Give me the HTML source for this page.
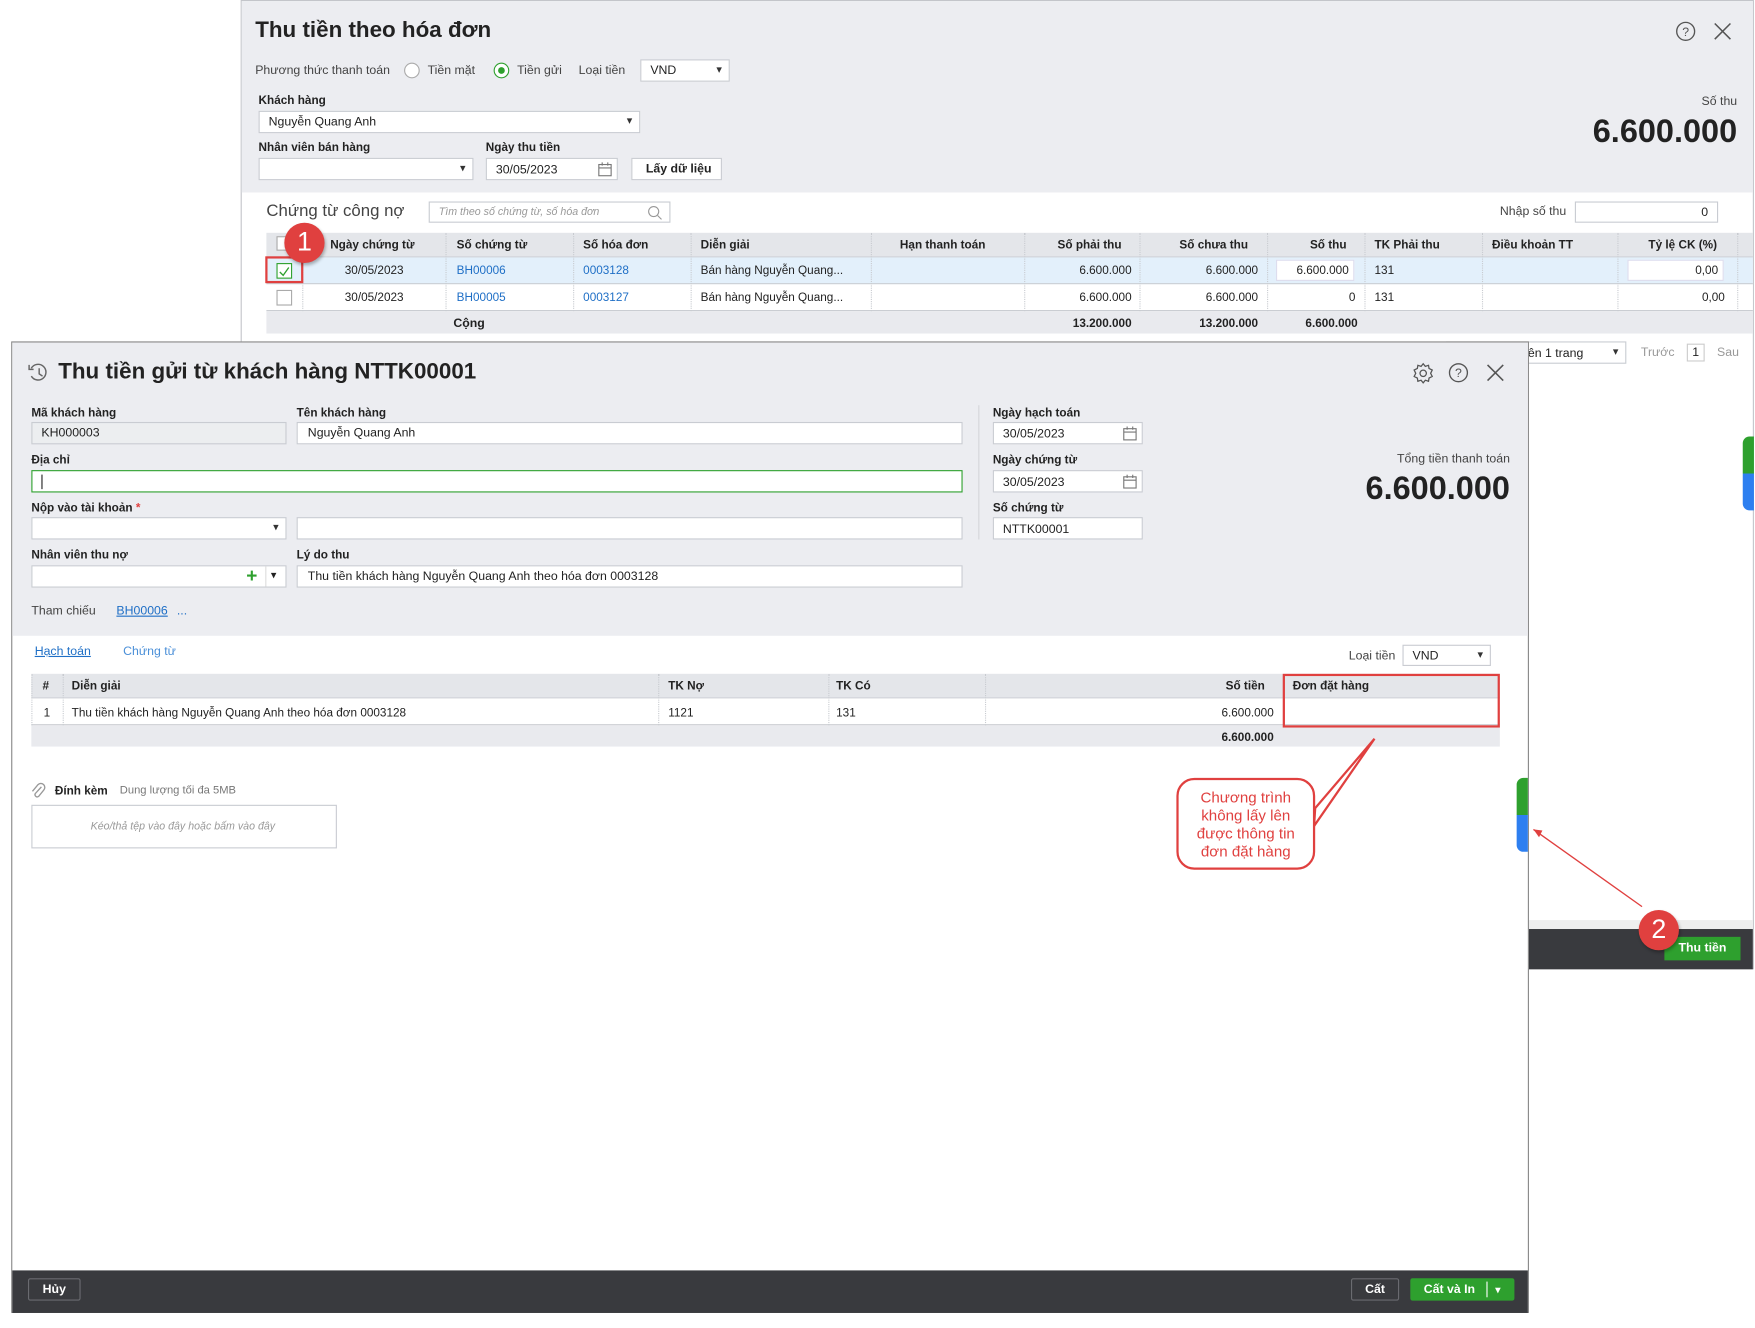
<!DOCTYPE html>
<html><head><meta charset="utf-8"><style>
*{box-sizing:border-box;margin:0;padding:0}
html,body{width:1755px;height:1327px;overflow:hidden;background:#fff;font-family:"Liberation Sans",sans-serif;color:#222}
#w{position:absolute;left:0;top:0;width:1568px;height:1186px;transform:scale(1.1193);transform-origin:0 0}
.a{position:absolute}
.t{position:absolute;font-size:11px;white-space:nowrap;line-height:1}
.b{font-weight:bold;font-size:10.5px}
.in{position:absolute;background:#fff;border:1px solid #c9ccd2;height:20px}
.dd:after{content:"▾";position:absolute;right:6px;top:3px;font-size:10px;color:#333}
.hd{position:absolute;background:#e4e6ea;border-bottom:1px solid #cfd2d8}
.c{position:absolute;font-size:10.5px;white-space:nowrap;line-height:1}
.vl{position:absolute;border-left:1px dotted #c8cbd0}
.link{color:#1f6fc6}
.badge{position:absolute;width:36px;height:36px;border-radius:50%;background:#e0403f;color:#fff;font-size:24px;text-align:center;line-height:36px;box-shadow:1px 2px 3px rgba(0,0,0,.3)}
</style></head><body><div id="w">

<!-- back dialog -->
<div class="a" style="left:215px;top:0;width:1352px;height:866px;border:1px solid #c3c5ca;background:#fff"></div>
<div class="a" style="left:216px;top:1px;width:1350px;height:171px;background:#ecedf1"></div>
<div class="t" style="left:228px;top:17px;font-size:20px;font-weight:bold">Thu tiền theo hóa đơn</div>
<svg class="a" style="left:1497px;top:19px" width="18" height="18"><circle cx="9" cy="9" r="8" fill="none" stroke="#555" stroke-width="1.2"/><text x="9" y="13" font-size="11" text-anchor="middle" fill="#555" font-family="Liberation Sans">?</text></svg>
<svg class="a" style="left:1531px;top:20px" width="16" height="16"><path d="M1 1L15 15M15 1L1 15" stroke="#555" stroke-width="1.4"/></svg>
<div class="t" style="left:228px;top:58px;color:#444">Phương thức thanh toán</div>
<div class="a" style="left:361px;top:56px;width:14px;height:14px;border:1px solid #aaa;border-radius:50%;background:#fff"></div>
<div class="t" style="left:382px;top:58px;color:#444">Tiền mặt</div>
<div class="a" style="left:441px;top:56px;width:14px;height:14px;border:1px solid #2ea02e;border-radius:50%;background:#fff"><div class="a" style="left:3px;top:3px;width:6px;height:6px;border-radius:50%;background:#2ea02e"></div></div>
<div class="t" style="left:462px;top:58px;color:#444">Tiền gửi</div>
<div class="t" style="left:517px;top:58px;color:#444">Loại tiền</div>
<div class="in dd" style="left:572px;top:53px;width:80px"><span class="t" style="left:8px;top:4px">VND</span></div>
<div class="t b" style="left:231px;top:85px">Khách hàng</div>
<div class="in dd" style="left:231px;top:99px;width:341px"><span class="t" style="left:8px;top:4px">Nguyễn Quang Anh</span></div>
<div class="t b" style="left:231px;top:127px">Nhân viên bán hàng</div>
<div class="in dd" style="left:231px;top:141px;width:192px"></div>
<div class="t b" style="left:434px;top:127px">Ngày thu tiền</div>
<div class="in" style="left:434px;top:141px;width:118px"><span class="t" style="left:8px;top:5px">30/05/2023</span><svg class="a" style="left:99px;top:3px" width="13" height="13"><rect x="1" y="2" width="11" height="10" fill="none" stroke="#777"/><path d="M1 5H12M4 0V3M9 0V3" stroke="#777"/></svg></div>
<div class="in" style="left:564px;top:141px;width:81px"><span class="t b" style="left:12px;top:4px;font-size:11px">Lấy dữ liệu</span></div>
<div class="t" style="right:16px;top:86px;color:#444">Số thu</div>
<div class="t" style="right:16px;top:104px;font-size:29px;font-weight:bold">6.600.000</div>

<div class="t" style="left:238px;top:181px;font-size:15px;color:#444">Chứng từ công nợ</div>
<div class="in" style="left:383px;top:180px;width:216px;height:19px"><span class="t" style="left:8px;top:4px;font-size:9.5px;font-style:italic;color:#999">Tìm theo số chứng từ, số hóa đơn</span><svg class="a" style="left:194px;top:2px" width="14" height="14"><circle cx="6" cy="6" r="4.5" fill="none" stroke="#999"/><path d="M9.5 9.5L13 13" stroke="#999"/></svg></div>
<div class="t" style="left:1340px;top:184px;color:#444">Nhập số thu</div>
<div class="in" style="left:1407px;top:180px;width:128px;height:19px"><span class="t" style="right:8px;top:4px">0</span></div>

<div class="hd" style="left:238px;top:208px;width:1328px;height:22px"></div>
<div class="a" style="left:238px;top:230px;width:1328px;height:24px;background:#e3f0fb;border-bottom:1px solid #c8cbd0"></div>
<div class="a" style="left:238px;top:254px;width:1328px;height:24px;background:#fff;border-bottom:1px solid #c8cbd0"></div>
<div class="a" style="left:238px;top:278px;width:1328px;height:20px;background:#e9eaee"></div>
<div class="vl" style="left:270px;top:208px;height:70px"></div><div class="vl" style="left:398px;top:208px;height:70px"></div><div class="vl" style="left:512px;top:208px;height:70px"></div><div class="vl" style="left:617px;top:208px;height:70px"></div><div class="vl" style="left:778px;top:208px;height:70px"></div><div class="vl" style="left:915px;top:208px;height:70px"></div><div class="vl" style="left:1018px;top:208px;height:70px"></div><div class="vl" style="left:1132px;top:208px;height:70px"></div><div class="vl" style="left:1219px;top:208px;height:70px"></div><div class="vl" style="left:1324px;top:208px;height:70px"></div><div class="vl" style="left:1445px;top:208px;height:70px"></div><div class="vl" style="left:1552px;top:208px;height:70px"></div>
<div class="a" style="left:247px;top:211px;width:13px;height:13px;border:1px solid #aaa;background:#fff"></div>
<div class="c b" style="left:295px;top:214px">Ngày chứng từ</div>
<div class="c b" style="left:408px;top:214px">Số chứng từ</div>
<div class="c b" style="left:521px;top:214px">Số hóa đơn</div>
<div class="c b" style="left:626px;top:214px">Diễn giải</div>
<div class="c b" style="left:804px;top:214px">Hạn thanh toán</div>
<div class="c b" style="right:566px;top:214px">Số phải thu</div>
<div class="c b" style="right:453px;top:214px">Số chưa thu</div>
<div class="c b" style="right:365px;top:214px">Số thu</div>
<div class="c b" style="left:1228px;top:214px">TK Phải thu</div>
<div class="c b" style="left:1333px;top:214px">Điều khoản TT</div>
<div class="c b" style="right:34px;top:214px">Tỷ lệ CK (%)</div>
<div class="a" style="left:237px;top:229px;width:34px;height:24px;border:2px solid #e0403f"></div>
<div class="a" style="left:247px;top:235px;width:14px;height:14px;border:1px solid #2ea02e;background:#fff"><svg width="12" height="12"><path d="M2 6L5 9L10 2" fill="none" stroke="#2ea02e" stroke-width="1.2"/></svg></div>
<div class="a" style="left:247px;top:259px;width:14px;height:14px;border:1px solid #aaa;background:#fff"></div>
<div class="c" style="left:308px;top:237px">30/05/2023</div><div class="c" style="left:308px;top:261px">30/05/2023</div>
<div class="c link" style="left:408px;top:237px">BH00006</div><div class="c link" style="left:408px;top:261px">BH00005</div>
<div class="c link" style="left:521px;top:237px">0003128</div><div class="c link" style="left:521px;top:261px">0003127</div>
<div class="c" style="left:626px;top:237px">Bán hàng Nguyễn Quang...</div><div class="c" style="left:626px;top:261px">Bán hàng Nguyễn Quang...</div>
<div class="c" style="right:557px;top:237px">6.600.000</div><div class="c" style="right:557px;top:261px">6.600.000</div>
<div class="c" style="right:444px;top:237px">6.600.000</div><div class="c" style="right:444px;top:261px">6.600.000</div>
<div class="in" style="left:1140px;top:232px;width:70px;height:19px;border-color:#dde"><span class="c" style="right:4px;top:4px">6.600.000</span></div>
<div class="c" style="right:357px;top:261px">0</div>
<div class="c" style="left:1228px;top:237px">131</div><div class="c" style="left:1228px;top:261px">131</div>
<div class="in" style="left:1454px;top:232px;width:86px;height:19px;border-color:#dde"><span class="c" style="right:4px;top:4px">0,00</span></div>
<div class="c" style="right:27px;top:261px">0,00</div>
<div class="c b" style="left:405px;top:284px;font-size:11px">Cộng</div>
<div class="c b" style="right:557px;top:284px">13.200.000</div>
<div class="c b" style="right:444px;top:284px">13.200.000</div>
<div class="c b" style="right:355px;top:284px">6.600.000</div>

<div class="in dd" style="left:1292px;top:305px;width:161px"><span class="t" style="left:72px;top:5px">ên 1 trang</span></div>
<div class="t" style="left:1466px;top:310px;color:#999">Trước</div>
<div class="a" style="left:1507px;top:307px;width:16px;height:16px;border:1px solid #ccc;font-size:11px;text-align:center;line-height:14px">1</div>
<div class="t" style="left:1534px;top:310px;color:#999">Sau</div>
<div class="a" style="left:1557px;top:390px;width:10px;height:66px;border-radius:6px 0 0 6px;background:linear-gradient(#2ea02e 50%,#2d7ff0 50%)"></div>
<div class="a" style="left:1365px;top:822px;width:201px;height:8px;background:#eee"></div>
<div class="a" style="left:1365px;top:830px;width:201px;height:36px;background:#393a3e"></div>
<div class="a" style="left:1487px;top:837px;width:68px;height:21px;background:#2ea02e;color:#fff;font-size:11px;font-weight:bold;text-align:center;line-height:21px">Thu tiền</div>

<!-- front dialog -->
<div class="a" style="left:10px;top:305px;width:1356px;height:868px;border:1px solid #888;background:#fff"></div>
<div class="a" style="left:11px;top:306px;width:1354px;height:262px;background:#ecedf1"></div>
<svg class="a" style="left:24px;top:323px" width="20" height="20"><path d="M4 13A7 7 0 1 0 4 6" fill="none" stroke="#666" stroke-width="1.3"/><path d="M2 3V7H6" fill="none" stroke="#666" stroke-width="1.3"/><path d="M11 6V11L14 13" fill="none" stroke="#666" stroke-width="1.3"/></svg>
<div class="t" style="left:52px;top:322px;font-size:20px;font-weight:bold">Thu tiền gửi từ khách hàng NTTK00001</div>
<svg class="a" style="left:1262px;top:324px" width="19" height="19" viewBox="0 0 20 20"><path d="M10 1L12 3.5L15 2.5L15.5 5.5L18.5 7L17 10L18.5 13L15.5 14.5L15 17.5L12 16.5L10 19L8 16.5L5 17.5L4.5 14.5L1.5 13L3 10L1.5 7L4.5 5.5L5 2.5L8 3.5Z" fill="none" stroke="#555" stroke-width="1.2"/><circle cx="10" cy="10" r="3" fill="none" stroke="#555" stroke-width="1.2"/></svg>
<svg class="a" style="left:1294px;top:324px" width="18" height="18"><circle cx="9" cy="9" r="8" fill="none" stroke="#555" stroke-width="1.2"/><text x="9" y="13" font-size="11" text-anchor="middle" fill="#555" font-family="Liberation Sans">?</text></svg>
<svg class="a" style="left:1328px;top:325px" width="16" height="16"><path d="M1 1L15 15M15 1L1 15" stroke="#555" stroke-width="1.4"/></svg>

<div class="t b" style="left:28px;top:364px">Mã khách hàng</div>
<div class="in" style="left:28px;top:377px;width:228px;background:#eceef0"><span class="t" style="left:8px;top:4px">KH000003</span></div>
<div class="t b" style="left:265px;top:364px">Tên khách hàng</div>
<div class="in" style="left:265px;top:377px;width:595px"><span class="t" style="left:9px;top:4px">Nguyễn Quang Anh</span></div>
<div class="t b" style="left:28px;top:406px">Địa chỉ</div>
<div class="in" style="left:28px;top:420px;width:832px;border-color:#2ea02e"><div class="a" style="left:8px;top:3px;width:1px;height:13px;background:#222"></div></div>
<div class="t b" style="left:28px;top:449px">Nộp vào tài khoản <span style="color:#e0403f">*</span></div>
<div class="in dd" style="left:28px;top:462px;width:228px"></div>
<div class="in" style="left:265px;top:462px;width:595px"></div>
<div class="t b" style="left:28px;top:491px">Nhân viên thu nợ</div>
<div class="in" style="left:28px;top:505px;width:228px"><span class="t" style="left:191px;top:0px;color:#2ea02e;font-size:17px;font-weight:bold">+</span><div class="a" style="left:208px;top:0;height:18px;border-left:1px solid #ddd"></div><span class="t" style="left:213px;top:4px;font-size:10px">▾</span></div>
<div class="t b" style="left:265px;top:491px">Lý do thu</div>
<div class="in" style="left:265px;top:505px;width:595px"><span class="t" style="left:9px;top:4px">Thu tiền khách hàng Nguyễn Quang Anh theo hóa đơn 0003128</span></div>
<div class="t" style="left:28px;top:541px;color:#444">Tham chiếu</div>
<div class="t link" style="left:104px;top:541px;text-decoration:underline">BH00006</div>
<div class="t link" style="left:158px;top:541px">...</div>
<div class="a" style="left:874px;top:362px;height:120px;border-left:1px solid #d5d7db"></div>
<div class="t b" style="left:887px;top:364px">Ngày hạch toán</div>
<div class="in" style="left:887px;top:377px;width:134px"><span class="t" style="left:8px;top:5px">30/05/2023</span><svg class="a" style="left:115px;top:3px" width="13" height="13"><rect x="1" y="2" width="11" height="10" fill="none" stroke="#777"/><path d="M1 5H12M4 0V3M9 0V3" stroke="#777"/></svg></div>
<div class="t b" style="left:887px;top:406px">Ngày chứng từ</div>
<div class="in" style="left:887px;top:420px;width:134px"><span class="t" style="left:8px;top:5px">30/05/2023</span><svg class="a" style="left:115px;top:3px" width="13" height="13"><rect x="1" y="2" width="11" height="10" fill="none" stroke="#777"/><path d="M1 5H12M4 0V3M9 0V3" stroke="#777"/></svg></div>
<div class="t b" style="left:887px;top:449px">Số chứng từ</div>
<div class="in" style="left:887px;top:462px;width:134px"><span class="t" style="left:8px;top:5px">NTTK00001</span></div>
<div class="t" style="right:219px;top:405px;color:#444">Tổng tiền thanh toán</div>
<div class="t" style="right:219px;top:423px;font-size:29px;font-weight:bold">6.600.000</div>

<div class="t link" style="left:31px;top:577px;text-decoration:underline">Hạch toán</div>
<div class="t link" style="left:110px;top:577px;color:#4a8fd8">Chứng từ</div>
<div class="t" style="left:1205px;top:581px;color:#444">Loại tiền</div>
<div class="in dd" style="left:1253px;top:576px;width:79px;height:19px"><span class="t" style="left:8px;top:4px">VND</span></div>

<div class="hd" style="left:28px;top:602px;width:1312px;height:22px"></div>
<div class="a" style="left:28px;top:624px;width:1312px;height:24px;background:#fff;border-bottom:1px solid #c8cbd0"></div>
<div class="a" style="left:28px;top:648px;width:1312px;height:19px;background:#e9eaee"></div>
<div class="vl" style="left:28px;top:602px;height:46px"></div><div class="vl" style="left:56px;top:602px;height:46px"></div><div class="vl" style="left:588px;top:602px;height:46px"></div><div class="vl" style="left:740px;top:602px;height:46px"></div><div class="vl" style="left:880px;top:602px;height:46px"></div>
<div class="c b" style="left:38px;top:608px">#</div>
<div class="c b" style="left:64px;top:608px">Diễn giải</div>
<div class="c b" style="left:597px;top:608px">TK Nợ</div>
<div class="c b" style="left:747px;top:608px">TK Có</div>
<div class="c b" style="right:438px;top:608px">Số tiền</div>
<div class="c b" style="left:1155px;top:608px">Đơn đặt hàng</div>
<div class="c" style="left:39px;top:632px">1</div>
<div class="c" style="left:64px;top:632px">Thu tiền khách hàng Nguyễn Quang Anh theo hóa đơn 0003128</div>
<div class="c" style="left:597px;top:632px">1121</div>
<div class="c" style="left:747px;top:632px">131</div>
<div class="c" style="right:430px;top:632px">6.600.000</div>
<div class="c b" style="right:430px;top:654px">6.600.000</div>
<div class="a" style="left:1146px;top:602px;width:194px;height:48px;border:2px solid #e0403f"></div>

<svg class="a" style="left:27px;top:698px" width="14" height="16"><path d="M10 5L4.5 11A2 2 0 0 0 7.5 13.5L12 8A3.5 3.5 0 0 0 7 3L2 9" fill="none" stroke="#999" stroke-width="1.2"/></svg>
<div class="t b" style="left:49px;top:702px">Đính kèm</div>
<div class="t" style="left:107px;top:702px;color:#777;font-size:10px">Dung lượng tối đa 5MB</div>
<div class="a" style="left:28px;top:719px;width:273px;height:39px;border:1px solid #c9ccd2"></div>
<div class="t" style="left:81px;top:734px;font-size:9.5px;font-style:italic;color:#999">Kéo/thả tệp vào đây hoặc bấm vào đây</div>

<svg class="a" style="left:0;top:0;overflow:visible" width="1568" height="1186">
<path d="M1228 660L1175 722L1174 738Z" fill="#fff" stroke="#e0403f" stroke-width="2"/>
<path d="M1467 810L1370 741" stroke="#e0403f" stroke-width="1.2"/>
<path d="M1370 741L1378 742L1375 748Z" fill="#e0403f"/>
</svg>
<div class="a" style="left:1051px;top:695px;width:124px;height:82px;border:2px solid #e0403f;border-radius:16px;background:#fff;color:#e0403f;font-size:13.5px;text-align:center;line-height:16px;padding-top:8px">Chương trình<br>không lấy lên<br>được thông tin<br>đơn đặt hàng</div>
<div class="a" style="left:1355px;top:695px;width:10px;height:66px;border-radius:6px 0 0 6px;background:linear-gradient(#2ea02e 50%,#2d7ff0 50%)"></div>

<div class="a" style="left:11px;top:1135px;width:1354px;height:38px;background:#393a3e"></div>
<div class="a" style="left:25px;top:1142px;width:47px;height:20px;border:1px solid #6a6b70;border-radius:2px;color:#fff;font-size:11px;font-weight:bold;text-align:center;line-height:18px">Hủy</div>
<div class="a" style="left:1207px;top:1142px;width:43px;height:20px;border:1px solid #6a6b70;border-radius:2px;color:#fff;font-size:11px;font-weight:bold;text-align:center;line-height:18px">Cất</div>
<div class="a" style="left:1260px;top:1142px;width:93px;height:20px;background:#2ea02e;border-radius:2px;color:#fff;font-size:11px;font-weight:bold;line-height:20px;padding-left:12px">Cất và In<span class="a" style="left:68px;top:3px;height:14px;border-left:1px solid #fff"></span><span class="a" style="left:76px;top:0;font-size:9px">▾</span></div>

<div class="badge" style="left:254px;top:199px">1</div>
<div class="badge" style="left:1464px;top:813px">2</div>
</div></body></html>
